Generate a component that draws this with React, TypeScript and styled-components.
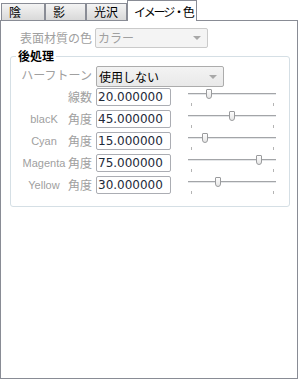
import React from "react";
import styled, { createGlobalStyle } from "styled-components";

const GlobalStyle = createGlobalStyle`
  html, body {
    margin: 0;
    background: #fff;
  }
  body {
    font-family: "Noto Sans CJK JP", sans-serif;
    font-size: 12px;
  }
`;

const Window = styled.div`
  width: 298px;
  height: 379px;
  display: flex;
  flex-direction: column;
  box-sizing: border-box;
`;

const TabBar = styled.div`
  display: flex;
  align-items: flex-end;
  height: 20px;
  padding-left: 1px;
`;

const Tab = styled.div<{ $w: number; $active?: boolean }>`
  position: relative;
  box-sizing: border-box;
  width: ${(p) => p.$w}px;
  height: ${(p) => (p.$active ? 21 : 17)}px;
  margin-bottom: ${(p) => (p.$active ? -1 : 0)}px;
  z-index: ${(p) => (p.$active ? 1 : 0)};
  border: 1px solid #898c95;
  border-bottom: none;
  background: ${(p) =>
    p.$active ? "#fff" : "linear-gradient(#f4f4f4, #e6e6e6 50%, #d9d9d9)"};
  color: #000;
  font-size: 12px;
  line-height: 15px;
  white-space: nowrap;
  letter-spacing: ${(p) => (p.$active ? "-2.2px" : "0")};
  padding: ${(p) => (p.$active ? "3px 0 0 6px" : "0 0 0 7px")};
`;

const Panel = styled.div`
  flex: 1;
  box-sizing: border-box;
  border: 1px solid #898c95;
  padding-top: 7px;
`;

const TopRow = styled.div`
  display: flex;
  align-items: center;
  height: 20px;
`;

const Label = styled.div<{ $w: number }>`
  width: ${(p) => p.$w}px;
  display: flex;
  justify-content: flex-end;
  color: #a0a0a0;
  font-size: 12px;
  line-height: 18px;
  white-space: nowrap;
`;

const Name = styled.span`
  width: 46px;
  margin-right: 1px;
  text-align: center;
  font-family: "Liberation Sans", sans-serif;
  font-size: 11px;
`;

const Select = styled.div<{ $w: number; $h: number; $disabled?: boolean }>`
  position: relative;
  box-sizing: border-box;
  width: ${(p) => p.$w}px;
  height: ${(p) => p.$h}px;
  border: 1px solid ${(p) => (p.$disabled ? "#cacaca" : "#acacac")};
  border-radius: 2px;
  background: ${(p) =>
    p.$disabled ? "#f4f4f4" : "linear-gradient(#f3f3f3, #e9e9e9)"};
  color: ${(p) => (p.$disabled ? "#a0a0a0" : "#000")};
  font-size: 12px;
  line-height: ${(p) => p.$h - 2}px;
  padding-left: 2px;
  display: flex;
  align-items: center;
  justify-content: space-between;
`;

const Arrow = styled.span`
  width: 0;
  height: 0;
  margin-right: 6px;
  border-left: 4px solid transparent;
  border-right: 4px solid transparent;
  border-top: 4px solid #a8a8a8;
`;

const Group = styled.fieldset`
  margin: 1px 7px 0 9px;
  padding: 3px 0 8px 0;
  border: 1px solid #d5dfe5;
  border-radius: 3px;
  min-width: 0;
`;

const Legend = styled.legend`
  margin-left: 5px;
  padding: 0 2px;
  font-size: 12px;
  line-height: 14px;
  color: #000;
  font-weight: 700;
`;

const HalftoneRow = styled.div`
  display: flex;
  align-items: flex-start;
  height: 22px;
  gap: 4px;
`;

const ValueRow = styled.div`
  display: flex;
  align-items: flex-start;
  height: 22px;
`;

const Input = styled.div`
  box-sizing: border-box;
  width: 75px;
  height: 18px;
  margin-left: 4px;
  border: 1px solid #abadb3;
  border-radius: 2px;
  background: #fff;
  padding-left: 1px;
  font-family: "DejaVu Sans", sans-serif;
  font-size: 12px;
  line-height: 16px;
  color: #1e2a3a;
`;

const Slider = styled.div`
  position: relative;
  width: 88px;
  height: 18px;
  margin-left: 17px;
`;

const Track = styled.div`
  margin-top: 5px;
  height: 1px;
  border-top: 1px solid #a3a5a8;
  background: #e4e6e8;
`;

const Ticks = styled.div`
  display: flex;
  justify-content: space-between;
  margin-top: 8px;
  padding: 0 2px 0 3px;
`;

const Tick = styled.span`
  width: 1px;
  height: 3px;
  background: #b4b4b4;
`;

const Thumb = styled.div`
  position: absolute;
  top: 1px;
  box-sizing: border-box;
  width: 6px;
  height: 10px;
  border: 1px solid #9a9b9d;
  border-radius: 1px 1px 3px 3px;
  background: linear-gradient(#fdfdfd, #e6e6e6);
`;

const rows = [
  { name: "", label: "線数", value: 20 },
  { name: "blacK", label: "角度", value: 45 },
  { name: "Cyan", label: "角度", value: 15 },
  { name: "Magenta", label: "角度", value: 75 },
  { name: "Yellow", label: "角度", value: 30 },
];

export default function App() {
  return (
    <Window>
      <GlobalStyle />
      <TabBar>
        <Tab $w={44}>陰</Tab>
        <Tab $w={41}>影</Tab>
        <Tab $w={41}>光沢</Tab>
        <Tab $w={70} $active>
          イメージ・色
        </Tab>
      </TabBar>
      <Panel>
        <TopRow>
          <Label $w={91} style={{ marginRight: 3 }}>
            表面材質の色
          </Label>
          <Select $w={113} $h={20} $disabled>
            カラー
            <Arrow />
          </Select>
        </TopRow>
        <Group>
          <Legend>後処理</Legend>
          <HalftoneRow>
            <Label $w={81}>ハーフトーン</Label>
            <Select $w={128} $h={21}>
              使用しない
              <Arrow />
            </Select>
          </HalftoneRow>
          {rows.map((r) => (
            <ValueRow key={r.name + r.label}>
              <Label $w={81}>
                {r.name && <Name>{r.name}</Name>}
                {r.label}
              </Label>
              <Input>{r.value.toFixed(6)}</Input>
              <Slider>
                <Track />
                <Ticks>
                  <Tick />
                  <Tick />
                </Ticks>
                <Thumb style={{ left: 3 + (r.value / 90) * 82 - 3 }} />
              </Slider>
            </ValueRow>
          ))}
        </Group>
      </Panel>
    </Window>
  );
}
